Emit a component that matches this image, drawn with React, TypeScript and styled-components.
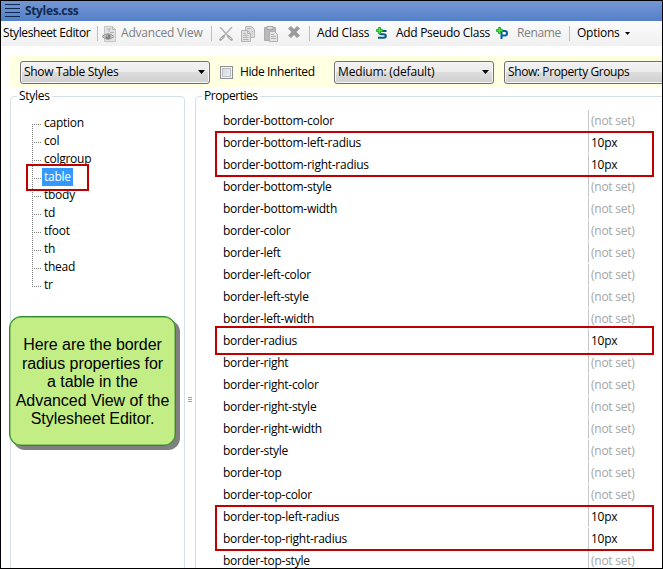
import React from "react";
import styled, { createGlobalStyle } from "styled-components";

const GlobalStyle = createGlobalStyle`
  * { box-sizing: border-box; }
  body { margin: 0; background: #fff; overflow: hidden; }
`;

const Frame = styled.div`
  width: 663px;
  height: 569px;
  border: 1px solid #000;
  overflow: hidden;
  background: #fff;
  color: #000;
  font: 12px/18px "Open Sans", "Noto Sans", sans-serif;
  letter-spacing: -0.26px;
  white-space: nowrap;
  display: flex;
  flex-direction: column;
`;

const TitleBar = styled.header`
  flex: none;
  height: 20px;
  padding-left: 4px;
  display: flex;
  align-items: center;
  gap: 5px;
  background: linear-gradient(#7497d5, #5480c7);
  color: #10294f;
  font-weight: 700;
  letter-spacing: -0.35px;
`;

const Toolbar = styled.div`
  flex: none;
  height: 25px;
  padding-left: 2px;
  display: flex;
  align-items: center;
  background: linear-gradient(#fbfbfc, #f0f0f1);
`;

const Label = styled.span<{ $w: number; $ls?: number; $muted?: boolean }>`
  flex: none;
  width: ${(p) => p.$w}px;
  padding-bottom: 1px;
  letter-spacing: ${(p) => p.$ls ?? -0.3}px;
  color: ${(p) => (p.$muted ? "#7f7f82" : "#000")};
`;

const Separator = styled.i<{ $gap: number }>`
  flex: none;
  width: 1px;
  height: 15px;
  margin-right: ${(p) => p.$gap}px;
  background: #bdbdbd;
`;

const Icon = styled.svg<{ $gap: number }>`
  flex: none;
  display: block;
  margin-right: ${(p) => p.$gap}px;
`;

const FilterBar = styled.div`
  flex: none;
  height: 32px;
  margin: 10px 0 0 9px;
  padding-left: 10px;
  display: flex;
  align-items: center;
  background: #ffffe1;
`;

const Select = styled.div<{ $w: number; $gap: number; $ls: number }>`
  flex: none;
  width: ${(p) => p.$w}px;
  height: 23px;
  margin-right: ${(p) => p.$gap}px;
  padding: 0 4px 0 3px;
  display: flex;
  align-items: center;
  justify-content: space-between;
  border: 1px solid #707070;
  border-radius: 3px;
  box-shadow: inset 0 0 0 1px #f8f8f8;
  background: linear-gradient(#f2f2f2 0, #ebebeb 50%, #dddddd 50%, #cfcfcf 100%);
  letter-spacing: ${(p) => p.$ls}px;
`;

const Checkbox = styled.i`
  flex: none;
  width: 13px;
  height: 13px;
  margin-right: 7px;
  border: 1px solid #8e8f8f;
  box-shadow: inset 0 0 0 1px #f4f4f4, inset 0 0 0 2px #b9bec4;
  background: linear-gradient(135deg, #cfd3d9, #f4f5f6);
`;

const Panels = styled.main`
  flex: 1;
  min-height: 0;
  padding: 8px 0 0 9px;
  display: flex;
`;

const Group = styled.section<{ $w: number }>`
  position: relative;
  flex: none;
  width: ${(p) => p.$w}px;
  height: 520px;
  border: 1px solid #d5dfe8;
  border-radius: 4px;
`;

const Legend = styled.h2<{ $left: number; $ls: number }>`
  width: fit-content;
  height: 18px;
  margin: -10px 0 0 ${(p) => p.$left}px;
  padding: 0 2px;
  background: #fff;
  font: inherit;
  letter-spacing: ${(p) => p.$ls}px;
`;

const Splitter = styled.div`
  flex: none;
  width: 10px;
  padding: 301px 0 0 3px;
`;

const Tree = styled.ul`
  position: relative;
  margin: 9px 0 0 21px;
  padding: 0;
  list-style: none;
`;

const TreeItem = styled.li<{ $last?: boolean }>`
  height: 18px;
  display: flex;
  background: repeating-linear-gradient(#808080 0 1px, transparent 1px 2px) 0 0 / 1px
    ${(p) => (p.$last ? "10px" : "100%")} no-repeat;

  &:first-child {
    background-position: 0 10px;
  }

  &::before {
    content: "";
    width: 10px;
    height: 1px;
    margin-top: 10px;
    background: repeating-linear-gradient(90deg, #808080 0 1px, transparent 1px 2px);
  }
`;

const TreeLabel = styled.span<{ $on: boolean }>`
  padding: 0 2px;
  line-height: 18px;
  letter-spacing: -0.26px;
  background: ${(p) => (p.$on ? "#3399ff" : "transparent")};
  color: ${(p) => (p.$on ? "#fff" : "#000")};
`;

const Highlight = styled.div<{ $x: number; $y: number; $w: number; $h: number }>`
  position: absolute;
  left: ${(p) => p.$x}px;
  top: ${(p) => p.$y}px;
  width: ${(p) => p.$w}px;
  height: ${(p) => p.$h}px;
  border: 2px solid #c00000;
`;

const Callout = styled.aside`
  position: absolute;
  left: -2px;
  top: 219px;
  width: 167px;
  height: 130px;
  padding-top: 19px;
  border: 1px solid #2d8a2d;
  border-radius: 12px;
  box-shadow: inset 0 0 0 0.5px #4f9a3c, 4px 4px 0 #808080;
  background: #c3ee85;
  text-align: center;
  font: 16px/18.6px "Liberation Sans", Arial, sans-serif;
  letter-spacing: -0.05px;
`;

const PropertyList = styled.div`
  position: relative;
  margin-top: 5px;
`;

const Row = styled.div`
  height: 22px;
  padding-left: 27px;
  display: flex;
  line-height: 22px;
`;

const Name = styled.span`
  width: 365px;
`;

const Value = styled.span<{ $set: boolean }>`
  height: 21px;
  padding-left: 2px;
  border-left: 1px solid #c8c8c8;
  color: ${(p) => (p.$set ? "#000" : "#a5a5a5")};
`;

const Arrow = ({ w = 7 }: { w?: number }) => (
  <svg width={w} height={w === 7 ? 4 : 3} viewBox="0 0 8 4" preserveAspectRatio="none">
    <path d="M0 0h8L4 4z" fill="#000" />
  </svg>
);

const MenuIcon = () => (
  <Icon $gap={0} width="15" height="14" viewBox="0 0 15 14">
    <path d="M0 .5h15M0 4.5h15M0 8.5h15M0 12.5h15" stroke="#10294f" />
  </Icon>
);

const PreviewIcon = () => (
  <Icon $gap={4} width="15" height="16" viewBox="0 0 15 16">
    <path d="M2.5.5h8l3 3v12h-11z" fill="#e2e2e2" stroke="#c6c6c6" />
    <path d="M10.5.5v3h3" fill="none" stroke="#b8b8b8" />
    <path d="M5 3h4M7 3v3M8 6.500h4" stroke="#b4b4b4" />
    <path d="M0 10.500Q6 5 12 10.500Q6 16 0 10.500z" fill="#c8c8c8" stroke="#9a9a9a" />
    <circle cx="6" cy="10.800" r="2.500" fill="#808080" />
    <circle cx="5.200" cy="10" r=".8" fill="#ddd" />
  </Icon>
);

const CutIcon = () => (
  <Icon $gap={8} width="14" height="14" viewBox="0 0 14 14">
    <path d="M1 0l9 10M13 0L4 10" stroke="#b4b4b4" strokeWidth="1.500" />
    <path d="M1.500 12.500L4.500 9.500M12.500 12.500L9.500 9.500" stroke="#a6a6a6" strokeWidth="2.600" strokeLinecap="round" />
    <path d="M1.800 12l1.500-1.500M12.200 12l-1.500-1.500" stroke="#eee" />
  </Icon>
);

const CopyIcon = () => (
  <Icon $gap={9} width="14" height="16" viewBox="0 0 14 16">
    <path d="M4.500.500h6l3 3v8h-9z" fill="#dcdcdc" stroke="#b9b9b9" />
    <path d="M.500 4.500h6l3 3v8h-9z" fill="#e2e2e2" stroke="#b3b3b3" />
    <path d="M6.500 4.500v3h3M2 7.500h3M2 9.500h5.500M2 11.500h5.500M2 13.500h5.500M6 2.500h4M11 5.500h1M11 7.500h1" fill="none" stroke="#b3b3b3" />
  </Icon>
);

const PasteIcon = () => (
  <Icon $gap={10} width="14" height="16" viewBox="0 0 14 16">
    <path d="M.500 1.500h11v13h-11z" fill="#b9b9b9" stroke="#acacac" />
    <path d="M3 .500h6v3H3z" fill="#dedede" stroke="#a5a5a5" />
    <path d="M5.500 5.500h5l3 3v7h-8z" fill="#e4e4e4" stroke="#b1b1b1" />
    <path d="M7 8.500h3M7 10.500h5M7 12.500h5" stroke="#b3b3b3" />
  </Icon>
);

const DeleteIcon = () => (
  <Icon $gap={9} width="12" height="15" viewBox="0 0 12 15">
    <path d="M3 0l3 3 3-3 3 2.500L8.500 6l3.500 3.500L9 12 6 9l-3 3-3-2.500L3.500 6 0 2.500z" fill="#9b9b9b" />
  </Icon>
);

const Plus = () => (
  <path d="M2.500.500h2v2h2v2h-2v2h-2v-2h-2v-2h2z" fill="#53dc45" stroke="#2bad31" />
);

const AddClassIcon = () => (
  <Icon $gap={9} width="11" height="13" viewBox="0 0 11 13">
    <path d="M10.500 4H5.500q-2 0-2 1.600T5.500 7.200h2.300q2 0 2 1.700T7.800 10.700H2" fill="none" stroke="#075b83" strokeWidth="2" />
    <Plus />
  </Icon>
);

const AddPseudoIcon = () => (
  <Icon $gap={9} width="12" height="13" viewBox="0 0 12 13">
    <path d="M5.500 12V4H9q2 0 2 2.200T9 8.500H5.500" fill="none" stroke="#0562a0" strokeWidth="2" />
    <Plus />
  </Icon>
);

const GripIcon = () => (
  <svg width="4" height="5" viewBox="0 0 4 5" display="block">
    <path d="M0 .5h4M0 2.500h4M0 4.500h4" stroke="#a0a0a0" />
  </svg>
);

const elements = ["caption", "col", "colgroup", "table", "tbody", "td", "tfoot", "th", "thead", "tr"];

const properties: [string, string?][] = [
  ["border-bottom-color"],
  ["border-bottom-left-radius", "10px"],
  ["border-bottom-right-radius", "10px"],
  ["border-bottom-style"],
  ["border-bottom-width"],
  ["border-color"],
  ["border-left"],
  ["border-left-color"],
  ["border-left-style"],
  ["border-left-width"],
  ["border-radius", "10px"],
  ["border-right"],
  ["border-right-color"],
  ["border-right-style"],
  ["border-right-width"],
  ["border-style"],
  ["border-top"],
  ["border-top-color"],
  ["border-top-left-radius", "10px"],
  ["border-top-right-radius", "10px"],
  ["border-top-style"],
];

export default function App() {
  return (
    <Frame>
      <GlobalStyle />
      <TitleBar>
        <MenuIcon />
        Styles.css
      </TitleBar>
      <Toolbar>
        <Label $w={94} $ls={-0.4}>Stylesheet Editor</Label>
        <Separator $gap={4} />
        <PreviewIcon />
        <Label $w={90} $ls={-0.2} $muted>Advanced View</Label>
        <Separator $gap={7} />
        <CutIcon />
        <CopyIcon />
        <PasteIcon />
        <DeleteIcon />
        <Separator $gap={7} />
        <Label $w={59} $ls={-0.2}>Add Class</Label>
        <AddClassIcon />
        <Label $w={100}>Add Pseudo Class</Label>
        <AddPseudoIcon />
        <Label $w={52} $ls={-0.35} $muted>Rename</Label>
        <Separator $gap={7} />
        <Label $w={48} $ls={-0.25}>Options</Label>
        <Arrow w={5} />
      </Toolbar>
      <FilterBar>
        <Select $w={190} $gap={10} $ls={-0.3}>Show Table Styles <Arrow /></Select>
        <Checkbox />
        <Label $w={94} $ls={-0.4}>Hide Inherited</Label>
        <Select $w={160} $gap={10} $ls={-0.16}>Medium: (default) <Arrow /></Select>
        <Select $w={190} $gap={0} $ls={-0.4}>Show: Property Groups <Arrow /></Select>
      </FilterBar>
      <Panels>
        <Group $w={175}>
          <Legend $left={6} $ls={-0.3}>Styles</Legend>
          <Tree>
            {elements.map((name, i) => (
              <TreeItem key={name} $last={i === elements.length - 1}>
                <TreeLabel $on={name === "table"}>{name}</TreeLabel>
              </TreeItem>
            ))}
          </Tree>
          <Highlight $x={15} $y={67} $w={63} $h={27} />
          <Callout>
            Here are the border<br />radius properties for<br />a table in the<br />
            Advanced View of the<br />Stylesheet Editor.
          </Callout>
        </Group>
        <Splitter><GripIcon /></Splitter>
        <Group $w={500}>
          <Legend $left={6} $ls={-0.45}>Properties</Legend>
          <PropertyList>
            {properties.map(([name, value]) => (
              <Row key={name}>
                <Name>{name}</Name>
                <Value $set={!!value}>{value ?? "(not set)"}</Value>
              </Row>
            ))}
            <Highlight $x={19} $y={21} $w={439} $h={46} />
            <Highlight $x={19} $y={216} $w={439} $h={29} />
            <Highlight $x={19} $y={395} $w={439} $h={46} />
          </PropertyList>
        </Group>
      </Panels>
    </Frame>
  );
}
